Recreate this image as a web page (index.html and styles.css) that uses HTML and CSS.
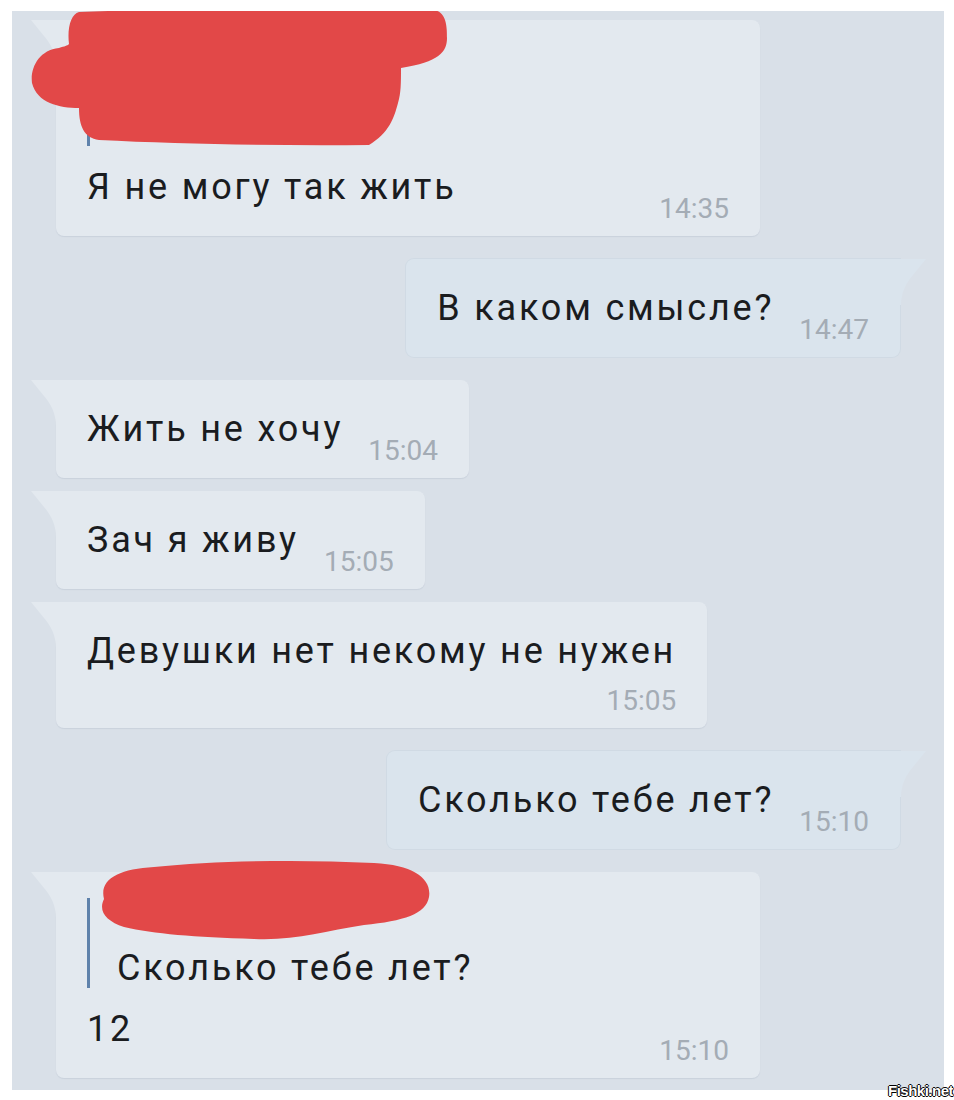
FILE: index.html
```html
<!DOCTYPE html>
<html lang="ru">
<head>
    <meta charset="UTF-8">
    <meta name="viewport" content="width=device-width, initial-scale=1.0">
    <title>Диалог</title>
    <link rel="stylesheet" href="styles.css">
</head>
<body>
    <div class="screen">
        <div class="chat">
            <div class="msg in wide">
                <div class="reply reply-tall">
                    <div class="reply-name"></div>
                    <div class="reply-text"></div>
                </div>
                <div class="row">
                    <span class="text">Я не могу так жить</span>
                    <span class="time">14:35</span>
                </div>
                <svg class="blot blot-top" width="420" height="140" viewBox="0 0 420 140">
                    <path d="M50 4 C150 0 320 0 404 2 C418 3 418 20 418 30 C418 44 410 54 372 60 C372 75 372 85 369 95 C365 110 360 125 340 137 C250 138 150 136 70 132 C55 130 50 118 50 100 C30 100 8 95 3 75 C1 60 10 42 30 40 C36 38 38 38 40 36 C38 20 42 6 50 4 Z"/>
                </svg>
            </div>

            <div class="msg out first">
                <div class="row">
                    <span class="text">В каком смысле?</span>
                    <span class="time">14:47</span>
                </div>
            </div>

            <div class="msg in first">
                <div class="row">
                    <span class="text">Жить не хочу</span>
                    <span class="time">15:04</span>
                </div>
            </div>

            <div class="msg in plain">
                <div class="row">
                    <span class="text">Зач я живу</span>
                    <span class="time">15:05</span>
                </div>
            </div>

            <div class="msg in plain">
                <div class="row stacked">
                    <span class="text">Девушки нет некому не нужен</span>
                    <span class="time">15:05</span>
                </div>
            </div>

            <div class="msg out first">
                <div class="row">
                    <span class="text">Сколько тебе лет?</span>
                    <span class="time">15:10</span>
                </div>
            </div>

            <div class="msg in wide first">
                <div class="reply">
                    <div class="reply-name"></div>
                    <div class="reply-text">Сколько тебе лет?</div>
                </div>
                <div class="row">
                    <span class="text">12</span>
                    <span class="time">15:10</span>
                </div>
                <svg class="blot blot-bottom" width="340" height="84" viewBox="0 0 340 84">
                    <path d="M10 40 C5 20 25 10 60 8 C120 2 200 0 280 4 C320 6 338 20 335 38 C332 55 310 62 270 66 C230 72 200 82 160 80 C100 78 60 75 30 68 C12 62 4 52 10 40 Z"/>
                </svg>
            </div>
        </div>
    </div>
    <div class="mark">Fishki.net</div>
</body>
</html>
```

FILE: styles.css
```css
body {
    margin: 0;
    background: #ffffff;
    font-family: Roboto, "Noto Sans", sans-serif;
}

.screen {
    margin: 11px 10px 0 12px;
    height: 1079px;
    background: #d9e0e8;
    overflow: hidden;
}

.chat {
    display: flex;
    flex-direction: column;
    gap: 13px;
    padding: 9px 44px 0 44px;
}

.msg {
    position: relative;
    box-sizing: border-box;
    background: #e3e9ef;
    border-radius: 8px;
    padding: 26px 31px 14px 31px;
    box-shadow: 0 1px 1px rgba(90, 110, 130, 0.12);
}

.msg.first {
    margin-top: 10px;
}

.msg.in {
    align-self: flex-start;
    border-top-left-radius: 0;
}

.msg.out {
    align-self: flex-end;
    background: #dae4ed;
    border-top-right-radius: 0;
    box-shadow: 0 0 0 1px #d0dae4;
}

.msg.in::before,
.msg.out::before {
    content: "";
    position: absolute;
    top: 0;
    width: 26px;
    height: 46px;
    background: inherit;
}

.msg.in::before {
    left: -25px;
    clip-path: path("M0 0 H26 V46 H25 C25 34 20 24 13 16 Z");
}

.msg.out::before {
    right: -26px;
    clip-path: path("M0 0 H26 L13 16 C6 24 1 34 1 46 H0 Z");
}

.msg.wide {
    width: 704px;
}

.row {
    display: flex;
    align-items: flex-end;
}

.row.stacked {
    flex-direction: column;
}

.row.stacked .text {
    align-self: flex-start;
    margin-bottom: 14px;
}

.text {
    font-size: 36px;
    line-height: 46px;
    letter-spacing: 2.8px;
    color: #1a1c1f;
    margin-bottom: 12px;
}

.time {
    font-size: 28px;
    line-height: 26px;
    color: #a4acb5;
    margin-left: 25px;
}

.wide .row {
    justify-content: space-between;
}

.reply {
    border-left: 3px solid #5f82ab;
    padding-left: 27px;
    margin-bottom: 18px;
}

.reply-name {
    height: 50px;
}

.reply-tall .reply-name {
    height: 60px;
}

.reply-text {
    font-size: 36px;
    line-height: 40px;
    letter-spacing: 2.8px;
    height: 40px;
    color: #1a1c1f;
}

.blot {
    position: absolute;
    fill: #e24848;
}

.blot-top {
    left: -27px;
    top: -12px;
}

.blot-bottom {
    left: 38px;
    top: -13px;
}

.mark {
    position: absolute;
    left: 888px;
    top: 1082px;
    font-family: "Liberation Sans Narrow", "Liberation Sans", sans-serif;
    font-weight: bold;
    font-size: 15px;
    letter-spacing: -0.5px;
    color: #ffffff;
    text-shadow: -1px 0 #000, 1px 0 #000, 0 -1px #000, 0 1px #000;
}
```
